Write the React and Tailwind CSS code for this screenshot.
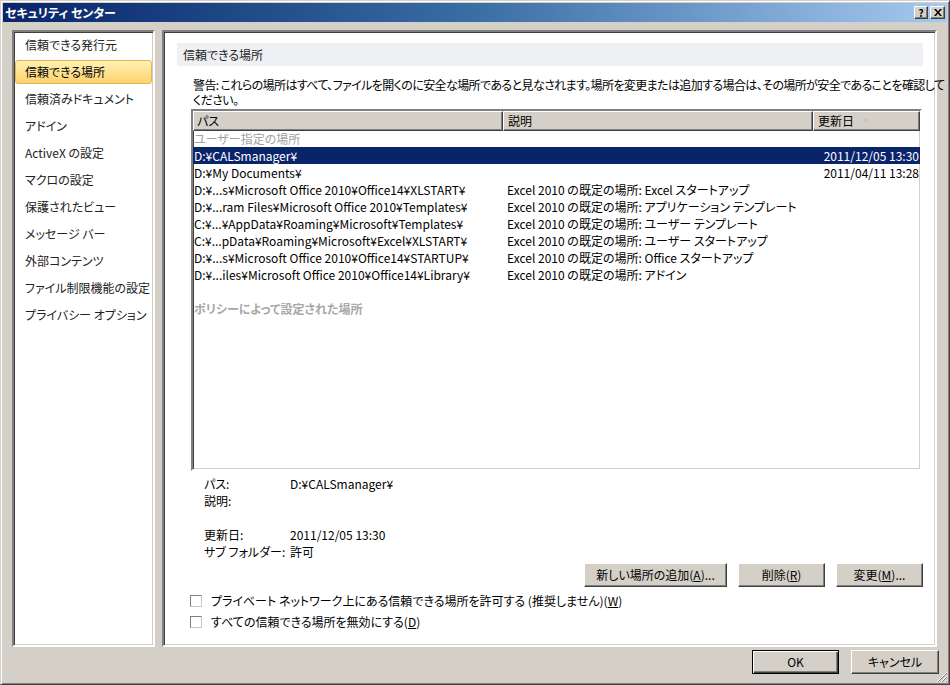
import React from "react";

const navItems = [
  "信頼できる発行元",
  "信頼できる場所",
  "信頼済みドキュメント",
  "アドイン",
  "ActiveX の設定",
  "マクロの設定",
  "保護されたビュー",
  "メッセージ バー",
  "外部コンテンツ",
  "ファイル制限機能の設定",
  "プライバシー オプション",
];

const rows = [
  { path: "D:¥CALSmanager¥", desc: "", date: "2011/12/05 13:30", selected: true },
  { path: "D:¥My Documents¥", desc: "", date: "2011/04/11 13:28" },
  { path: "D:¥...s¥Microsoft Office 2010¥Office14¥XLSTART¥", desc: "Excel 2010 の既定の場所: Excel スタートアップ" },
  { path: "D:¥...ram Files¥Microsoft Office 2010¥Templates¥", desc: "Excel 2010 の既定の場所: アプリケーション テンプレート" },
  { path: "C:¥...¥AppData¥Roaming¥Microsoft¥Templates¥", desc: "Excel 2010 の既定の場所: ユーザー テンプレート" },
  { path: "C:¥...pData¥Roaming¥Microsoft¥Excel¥XLSTART¥", desc: "Excel 2010 の既定の場所: ユーザー スタートアップ" },
  { path: "D:¥...s¥Microsoft Office 2010¥Office14¥STARTUP¥", desc: "Excel 2010 の既定の場所: Office スタートアップ" },
  { path: "D:¥...iles¥Microsoft Office 2010¥Office14¥Library¥", desc: "Excel 2010 の既定の場所: アドイン" },
];

const raised =
  "bg-[#d4d0c8] border border-t-white border-l-white border-r-[#404040] border-b-[#404040] shadow-[inset_-1px_-1px_0_#808080]";
const sunken =
  "border-2 border-t-[#808080] border-l-[#808080] border-r-white border-b-white shadow-[inset_1px_1px_0_#404040,inset_-1px_-1px_0_#d4d0c8]";

function Btn({ children, className = "" }) {
  return (
    <button className={`${raised} h-[24px] text-[12px] text-black flex items-center justify-center ${className}`}>
      {children}
    </button>
  );
}

function Check({ children }) {
  return (
    <div className="h-[21px] flex items-center -ml-[1px]">
      <span className="w-[12px] h-[12px] bg-white border border-t-[#808080] border-l-[#808080] border-r-[#c8c8c8] border-b-[#c8c8c8] shrink-0" />
      <span className="ml-[9px] text-[12px] text-black">{children}</span>
    </div>
  );
}

export default function App() {
  return (
    <div className="relative w-[950px] h-[685px] bg-[#d4d0c8] border border-t-[#d4d0c8] border-l-[#d4d0c8] border-r-[#404040] border-b-[#404040] shadow-[inset_1px_1px_0_#fff,inset_-1px_-1px_0_#808080] p-[2px] flex flex-col font-['Noto_Sans_CJK_JP',sans-serif] [font-feature-settings:'palt'] overflow-hidden">
      {/* title bar */}
      <div className="h-[19px] bg-linear-to-r from-[#0a246a] via-[#3a6ea5] to-[#a6caf0] flex items-center pl-[2px] pr-[2px]">
        <span className="text-white font-bold text-[12px] leading-none">セキュリティ センター</span>
        <div className="ml-auto flex gap-[2px]">
          <div className={`${raised} w-[14px] h-[13px] flex items-center justify-center text-[10px] font-bold leading-none text-black`}>?</div>
          <div className={`${raised} w-[15px] h-[13px] flex items-center justify-center`}>
            <svg width="8" height="7" viewBox="0 0 8 7">
              <path d="M0 0h2l2 2.5L6 0h2L5 3.5 8 7H6L4 4.5 2 7H0l3-3.5z" fill="#000" />
            </svg>
          </div>
        </div>
      </div>

      {/* main area */}
      <div className="mt-[8px] ml-[9px] flex gap-[7px] h-[617px]">
        {/* left nav */}
        <div className={`w-[143px] bg-white ${sunken} pt-[1px] px-[1px] flex flex-col gap-[3px]`}>
          {navItems.map((item, i) => (
            <div
              key={item}
              className={`h-[24px] flex items-center pl-[9px] text-[12px] border rounded-[3px] ${
                i === 1
                  ? "bg-linear-to-b from-[#fff0b4] to-[#fdd36b] border-[#e2b54e] text-black"
                  : "border-transparent text-[#222]"
              }`}
            >
              {item}
            </div>
          ))}
        </div>

        {/* content */}
        <div className={`w-[775px] bg-white ${sunken} pt-[11px] pl-[13px] pr-[12px] flex flex-col`}>
          <div className="h-[23px] bg-[#eef0f3] flex items-center pl-[6px] text-[12px] text-[#222]">信頼できる場所</div>

          <div className="pl-[14px] pr-[1px] flex flex-col">
            <p className="mt-[11px] pl-[2px] text-[12px] leading-[15px] text-black whitespace-nowrap tracking-[-0.6px]">
              警告: これらの場所はすべて、ファイルを開くのに安全な場所であると見なされます。場所を変更または追加する場合は、その場所が安全であることを確認して
              <br />
              ください。
            </p>

            {/* list view */}
            <div className={`mt-[2px] h-[362px] bg-white ${sunken} flex flex-col text-[12px]`}>
              <div className="grid grid-cols-[310px_310px_107px] h-[19px]">
                <div className={`${raised} pl-[3px] flex items-center`}>パス</div>
                <div className={`${raised} pl-[4px] flex items-center`}>説明</div>
                <div className={`${raised} pl-[4px] flex items-center gap-[8px]`}>
                  更新日
                  <svg width="7" height="4" viewBox="0 0 7 4">
                    <path d="M0 0h7L3.5 4z" fill="#c4c4c4" />
                  </svg>
                </div>
              </div>
              <div className="h-[17px] flex items-center pl-[1px] text-[#a0a0a0]">ユーザー指定の場所</div>
              {rows.map((r) => (
                <div
                  key={r.path}
                  className={`grid grid-cols-[310px_310px_107px] h-[17px] items-center whitespace-nowrap ${
                    r.selected ? "bg-[#0a246a] text-white" : "text-black"
                  }`}
                >
                  <span className="pl-[1px] overflow-hidden">{r.path}</span>
                  <span className="pl-[4px] overflow-hidden">{r.desc}</span>
                  <span className="text-right pr-[1px]">{r.date}</span>
                </div>
              ))}
              <div className="h-[17px]" />
              <div className="h-[17px] flex items-center pl-[1px] text-[#a8a8a8] font-semibold">ポリシーによって設定された場所</div>
            </div>

            {/* details */}
            <div className="mt-[4px] pl-[13px] text-[12px] text-black">
              <div className="h-[17px] flex items-center">
                <span className="w-[86px]">パス:</span>
                <span>D:¥CALSmanager¥</span>
              </div>
              <div className="h-[17px] flex items-center">
                <span className="w-[86px]">説明:</span>
              </div>
              <div className="h-[17px]" />
              <div className="h-[17px] flex items-center">
                <span className="w-[86px]">更新日:</span>
                <span>2011/12/05 13:30</span>
              </div>
              <div className="h-[17px] flex items-center">
                <span className="w-[86px]">サブ フォルダー:</span>
                <span>許可</span>
              </div>
            </div>

            <div className="mt-[3px] flex justify-end gap-[11px]">
              <Btn className="w-[143px]">
                新しい場所の追加(<span className="underline">A</span>)...
              </Btn>
              <Btn className="w-[87px]">
                削除(<span className="underline">R</span>)
              </Btn>
              <Btn className="w-[87px] -mr-[1px]">
                変更(<span className="underline">M</span>)...
              </Btn>
            </div>

            <div className="mt-[3px]">
              <Check>
                プライベート ネットワーク上にある信頼できる場所を許可する (推奨しません)(<span className="underline">W</span>)
              </Check>
              <Check>
                すべての信頼できる場所を無効にする(<span className="underline">D</span>)
              </Check>
            </div>
          </div>
        </div>
      </div>

      {/* bottom buttons */}
      <div className="mt-[3px] flex justify-end gap-[12px] pr-[8px]">
        <button className="w-[87px] h-[24px] border border-black bg-[#d4d0c8] shadow-[inset_1px_1px_0_#fff,inset_-1px_-1px_0_#404040,inset_-2px_-2px_0_#808080] text-[12px] text-black">
          OK
        </button>
        <Btn className="w-[88px]">キャンセル</Btn>
      </div>

      {/* resize grip */}
      <svg className="absolute right-[1px] bottom-[1px]" width="12" height="12" viewBox="0 0 12 12">
        <path d="M11 1L1 11M11 5L5 11M11 9L9 11" stroke="#fff" strokeWidth="1" />
        <path d="M11 2L2 11M11 6L6 11M11 10L10 11" stroke="#808080" strokeWidth="1" />
      </svg>
    </div>
  );
}
